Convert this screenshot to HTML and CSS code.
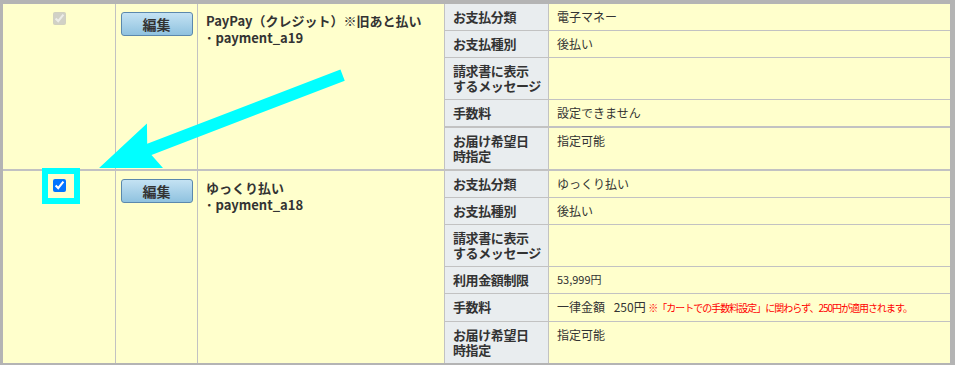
FILE: index.html
```html
<!DOCTYPE html>
<html lang="ja">

<head>
    <meta charset="UTF-8">
    <meta name="viewport" content="width=device-width, initial-scale=1.0">
    <title>決済方法一覧</title>
    <link rel="stylesheet" href="styles.css">
</head>

<body>
    <div class="frame">
        <div class="pay-list">
            <div class="pay-row">
                <div class="cell cell-check"><input type="checkbox" checked disabled></div>
                <div class="cell cell-edit"><button class="btn-edit">編集</button></div>
                <div class="cell cell-name">
                    <div class="pay-name">PayPay（クレジット）※旧あと払い</div>
                    <div class="pay-code">･ payment_a19</div>
                </div>
                <div class="detail">
                    <div class="d-label">お支払分類</div>
                    <div class="d-value">電子マネー</div>
                    <div class="d-label">お支払種別</div>
                    <div class="d-value">後払い</div>
                    <div class="d-label">請求書に表示<br>するメッセージ</div>
                    <div class="d-value"></div>
                    <div class="d-label">手数料</div>
                    <div class="d-value">設定できません</div>
                    <div class="d-label split">お届け希望日<br>時指定</div>
                    <div class="d-value split">指定可能</div>
                </div>
            </div>

            <div class="pay-row">
                <div class="cell cell-check"><input type="checkbox" checked></div>
                <div class="cell cell-edit"><button class="btn-edit">編集</button></div>
                <div class="cell cell-name">
                    <div class="pay-name">ゆっくり払い</div>
                    <div class="pay-code">･ payment_a18</div>
                </div>
                <div class="detail">
                    <div class="d-label">お支払分類</div>
                    <div class="d-value">ゆっくり払い</div>
                    <div class="d-label">お支払種別</div>
                    <div class="d-value">後払い</div>
                    <div class="d-label">請求書に表示<br>するメッセージ</div>
                    <div class="d-value"></div>
                    <div class="d-label">利用金額制限</div>
                    <div class="d-value num">53,999円</div>
                    <div class="d-label">手数料</div>
                    <div class="d-value">一律金額&ensp; 250円 <span class="note">※「カートでの手数料設定」に関わらず、250円が適用されます。</span></div>
                    <div class="d-label">お届け希望日<br>時指定</div>
                    <div class="d-value">指定可能</div>
                </div>
            </div>
        </div>

        <!-- 注釈: 矢印と枠 -->
        <svg class="arrow" width="955" height="168" viewBox="0 0 955 168">
            <g transform="translate(98,169) rotate(-21)">
                <polygon points="0,0 62,-25 55,-6 262,-6 262,6 55,6 62,25" fill="#00ffff" />
            </g>
        </svg>
        <div class="highlight"></div>
    </div>
</body>

</html>
```

FILE: styles.css
```css
body {
    margin: 0;
    font-family: "Noto Sans CJK JP", "Liberation Sans", sans-serif;
    color: #333;
    background-color: #b4b4b4;
}

.frame {
    position: relative;
    width: 955px;
    height: 365px;
    box-sizing: border-box;
    padding: 4px 5px 4px 3px;
    background-color: #b4b4b4;
    overflow: hidden;
}

.pay-list {
    display: flex;
    flex-direction: column;
    gap: 2px;
    background-color: #c2c2c2;
}

.pay-row {
    display: grid;
    grid-template-columns: 112px 81px 246px 1fr;
    gap: 1px;
    background-color: #c2c2c2;
}

.cell {
    background-color: #ffffcc;
}

.cell-check {
    display: flex;
    justify-content: center;
    padding-top: 8px;
}

.cell-check input {
    margin: 0 0 0 1px;
    width: 13px;
    height: 13px;
}

.cell-edit {
    display: flex;
    justify-content: center;
    align-items: flex-start;
    padding-top: 8px;
}

.btn-edit {
    width: 72px;
    height: 24px;
    padding: 0;
    font-family: inherit;
    font-size: 14px;
    font-weight: bold;
    color: #333;
    border: 1px solid #5b88ad;
    border-radius: 3px;
    background: linear-gradient(#c4e2f3, #8fc2df);
    cursor: pointer;
}

.cell-name {
    padding: 8px 8px 6px;
    font-size: 13px;
    font-weight: bold;
    line-height: 17px;
}

/* 詳細（ラベル / 値） */
.detail {
    display: grid;
    grid-template-columns: 103px 1fr;
    gap: 1px;
    background-color: #c2c2c2;
}

.d-label,
.d-value {
    padding: 5px 8px 6px;
    line-height: 15px;
    white-space: nowrap;
}

.d-label {
    padding-right: 2px;
    background-color: #e9edef;
    font-size: 13px;
    font-weight: bold;
    letter-spacing: -0.4px;
}

.d-value {
    background-color: #ffffcc;
    font-size: 12px;
    overflow: hidden;
}

.d-label.split,
.d-value.split {
    border-top: 1px solid #c2c2c2;
}

.num {
    font-size: 11px;
}

.note {
    color: #ff0000;
    font-size: 10px;
    letter-spacing: -1px;
}

.arrow {
    position: absolute;
    left: 0;
    top: 0;
}

.highlight {
    position: absolute;
    left: 42px;
    top: 168px;
    width: 38px;
    height: 36px;
    box-sizing: border-box;
    border: 6px solid #00ffff;
}
```
